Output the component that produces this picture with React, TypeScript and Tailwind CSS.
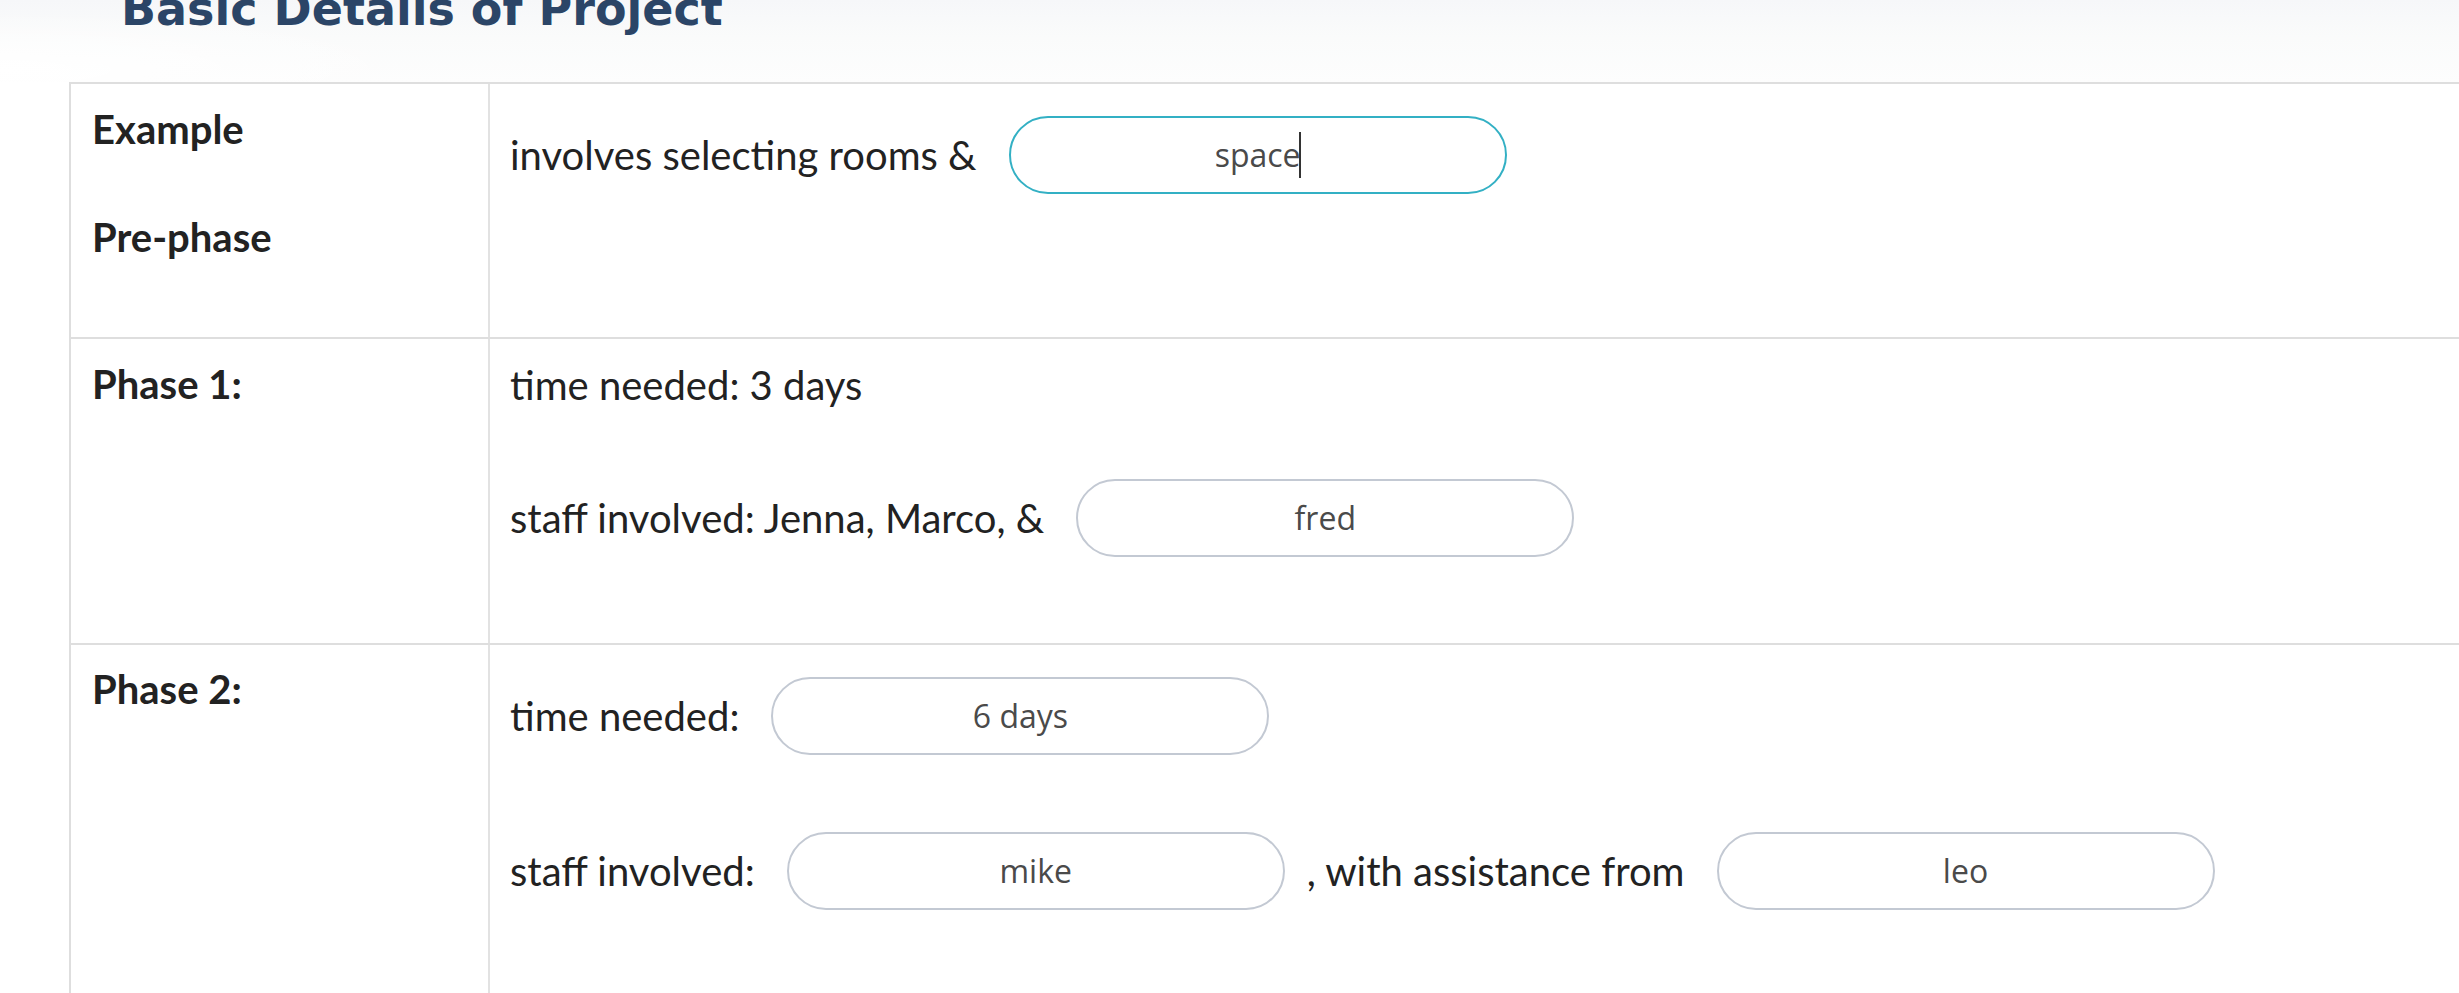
import type { ReactNode } from 'react'

const BODY_FONT = "font-['Lato','Noto_Sans',sans-serif]"

function Pill({ value, focused }: { value: string; focused?: boolean }) {
  return (
    <div
      className={`ml-[32px] flex h-[78px] w-[498px] shrink-0 items-center justify-center rounded-full border-2 bg-white font-['Open_Sans',sans-serif] text-[32px] leading-none text-[#4a4a4a] ${
        focused ? 'border-[#33b0c4]' : 'border-[#c3c9d3]'
      }`}
    >
      <span>{value}</span>
      {focused && <span className="-ml-[2px] inline-block h-[46px] w-[2px] bg-[#333]" />}
    </div>
  )
}

function Line({ children, className = '' }: { children: ReactNode; className?: string }) {
  return <div className={`flex h-[78px] items-center ${className}`}>{children}</div>
}

function Label({ children }: { children: ReactNode }) {
  return <p className="text-[40px] font-bold leading-[54px] text-[#222]">{children}</p>
}

export default function App() {
  return (
    <div className={`min-h-screen bg-white ${BODY_FONT}`}>
      {/* page heading, scrolled partly out of view */}
      <div className="h-[82px] overflow-hidden bg-[radial-gradient(ellipse_18%_70%_at_0%_85%,#ffffff_0%,rgba(255,255,255,0)_100%),linear-gradient(180deg,#f6f7f9_0%,#fafbfb_45%,#fdfdfd_100%)] pl-[121px]">
        <h1 className="-mt-[14px] font-['DejaVu_Sans',sans-serif] text-[46px] font-bold leading-[46px] text-[#2b4567]">
          Basic Details of Project
        </h1>
      </div>

      {/* details table */}
      <div className="ml-[69px] border-l-2 border-t-2 border-[#dedede] text-[40px] text-[#222]">
        {/* example row */}
        <div className="flex h-[255px] border-b-2 border-[#dedede]">
          <div className="w-[417px] shrink-0 pl-[21px] pt-[18px]">
            <Label>Example</Label>
            <div className="mt-[54px]">
              <Label>Pre-phase</Label>
            </div>
          </div>
          <div className="flex-1 border-l-2 border-[#e2e2e2] pl-[20px] pt-[32px]">
            <Line>
              <span className="leading-[54px]">involves selecting rooms &amp;</span>
              <Pill value="space" focused />
            </Line>
          </div>
        </div>

        {/* phase 1 */}
        <div className="flex h-[306px] border-b-2 border-[#dedede]">
          <div className="w-[417px] shrink-0 pl-[21px] pt-[18px]">
            <Label>Phase 1:</Label>
          </div>
          <div className="flex-1 border-l-2 border-[#e2e2e2] pl-[20px] pt-[19px]">
            <p className="leading-[54px]">time needed: 3 days</p>
            <Line className="mt-[67px]">
              <span className="leading-[54px]">staff involved: Jenna, Marco, &amp;</span>
              <Pill value="fred" />
            </Line>
          </div>
        </div>

        {/* phase 2 */}
        <div className="flex h-[400px]">
          <div className="w-[417px] shrink-0 pl-[21px] pt-[17px]">
            <Label>Phase 2:</Label>
          </div>
          <div className="flex-1 border-l-2 border-[#e2e2e2] pl-[20px] pt-[32px]">
            <Line>
              <span className="leading-[54px]">time needed:</span>
              <Pill value="6 days" />
            </Line>
            <Line className="mt-[77px]">
              <span className="leading-[54px]">staff involved:</span>
              <Pill value="mike" />
              <span className="ml-[22px] leading-[54px]">, with assistance from</span>
              <Pill value="leo" />
            </Line>
          </div>
        </div>
      </div>
    </div>
  )
}
